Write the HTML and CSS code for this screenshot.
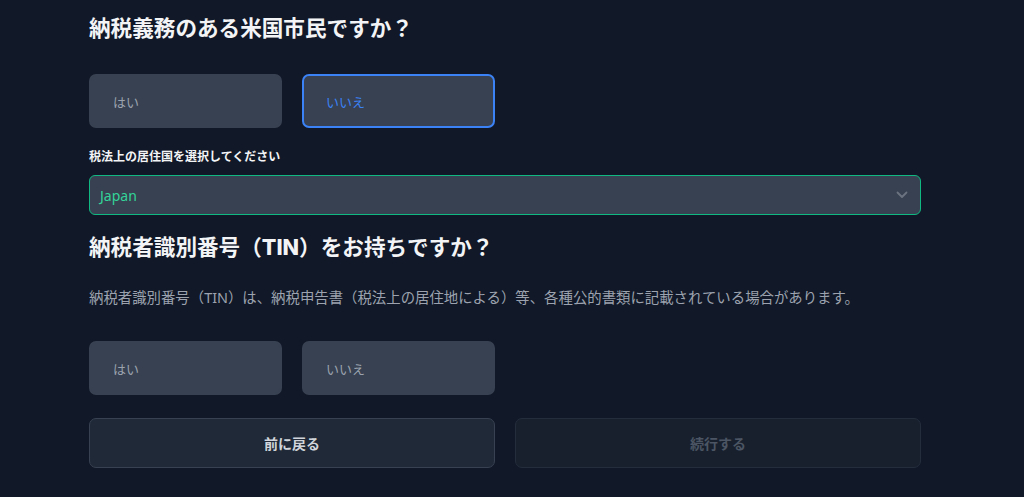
FILE: index.html
```html
<!DOCTYPE html>
<html lang="ja">
<head>
<meta charset="utf-8">
<link rel="stylesheet" href="styles.css">
</head>
<body>
<main class="form">
  <h2 class="q q-first">納税義務のある米国市民ですか？</h2>
  <div class="options options-first">
    <button class="opt">はい</button>
    <button class="opt opt-selected">いいえ</button>
  </div>
  <label class="label">税法上の居住国を選択してください</label>
  <div class="select">
    <span class="select-value">Japan</span>
    <svg class="chev" width="12" height="8" viewBox="0 0 12 8"><polyline points="1.5,1.5 6,6 10.5,1.5" fill="none" stroke="#6b7280" stroke-width="1.8" stroke-linecap="round" stroke-linejoin="round"/></svg>
  </div>
  <h2 class="q q-second">納税者識別番号（<span class="latin">TIN</span>）をお持ちですか？</h2>
  <p class="desc">納税者識別番号（TIN）は、納税申告書（税法上の居住地による）等、各種公的書類に記載されている場合があります。</p>
  <div class="options options-second">
    <button class="opt">はい</button>
    <button class="opt">いいえ</button>
  </div>
  <div class="nav">
    <button class="nav-btn back">前に戻る</button>
    <button class="nav-btn next" disabled>続行する</button>
  </div>
</main>
</body>
</html>
```

FILE: styles.css
```css
html, body {
  margin: 0;
  padding: 0;
  background: #111827;
  height: 100%;
}
body {
  font-family: "Noto Sans", "Noto Sans CJK JP", sans-serif;
  color: #e5e7eb;
  overflow: hidden;
}
.form {
  width: 832px;
  padding-left: 89px;
  display: flex;
  flex-direction: column;
}
.q {
  margin: 0;
  font-size: 21.6px;
  line-height: 28px;
  font-weight: 700;
  color: #f3f4f6;
}
.q-first { margin-top: 14px; }
.q-second { margin-top: 18px; }
.latin {
  font-family: Inter, "Noto Sans", sans-serif;
  font-weight: 800;
}
.options {
  display: grid;
  grid-template-columns: repeat(4, 193px);
  column-gap: 20px;
}
.options-first { margin-top: 32px; }
.options-second { margin-top: 32px; }
.opt {
  height: 54px;
  box-sizing: border-box;
  background: #374151;
  border: 2px solid #374151;
  border-radius: 7px;
  color: #9ca3af;
  font-family: inherit;
  font-size: 13px;
  text-align: left;
  padding: 0 0 0 22px;
}
.opt-selected {
  border-color: #3b82f6;
  color: #3b82f6;
}
.label {
  margin-top: 20px;
  font-size: 12px;
  line-height: 18px;
  font-weight: 700;
  color: #f3f4f6;
}
.select {
  margin-top: 9px;
  height: 40px;
  box-sizing: border-box;
  background: #374151;
  border: 1px solid #10b981;
  border-radius: 6px;
  display: flex;
  align-items: center;
  justify-content: space-between;
  padding: 0 12px 0 10px;
}
.select-value {
  font-size: 14px;
  color: #34d399;
}
.chev { display: block; }
.desc {
  margin: 26px 0 0;
  font-size: 14.4px;
  line-height: 22px;
  color: #9ca3af;
}
.nav {
  margin-top: 23px;
  display: grid;
  grid-template-columns: 1fr 1fr;
  column-gap: 20px;
}
.nav-btn {
  height: 50px;
  box-sizing: border-box;
  border-radius: 7px;
  font-family: inherit;
  font-size: 14px;
  font-weight: 700;
}
.back {
  background: #1f2937;
  border: 1px solid #374151;
  color: #d1d5db;
}
.next {
  background: #18202e;
  border: 1px solid #242d3c;
  color: #4b5563;
}
```
